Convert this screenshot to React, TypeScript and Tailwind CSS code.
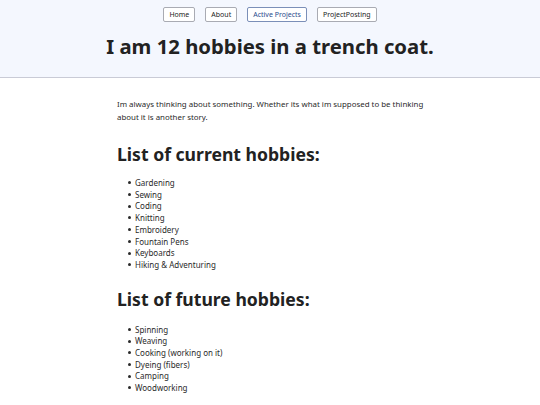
import React from "react";

const current = [
  "Gardening",
  "Sewing",
  "Coding",
  "Knitting",
  "Embroidery",
  "Fountain Pens",
  "Keyboards",
  "Hiking & Adventuring",
];

const future = [
  "Spinning",
  "Weaving",
  "Cooking (working on it)",
  "Dyeing (fibers)",
  "Camping",
  "Woodworking",
];

const links = ["Home", "About", "Active Projects", "ProjectPosting"];

function List({ items }: { items: string[] }) {
  return (
    <ul className="pl-[11px] text-[8px] leading-[11.7px] text-[#2a2a2a]">
      {items.map((h) => (
        <li key={h} className="flex items-center gap-[4px]">
          <span className="h-[3px] w-[3px] rounded-full bg-[#2a2a2a]" />
          {h}
        </li>
      ))}
    </ul>
  );
}

export default function App() {
  return (
    <div className="min-h-[405px] bg-white text-[#222] [font-family:'Noto_Sans',sans-serif]">
      <header className="h-[78px] border-b border-[#c9cbd6] bg-[#f4f7fe]">
        <nav className="flex justify-center gap-[10px] pt-[7px]">
          {links.map((l) => (
            <button
              key={l}
              type="button"
              className={`h-[15px] rounded-[2px] border bg-white px-[5px] text-[7px] leading-none ${
                l === "Active Projects" ? "border-[#7b8fb8] text-[#2a4c8e]" : "border-[#a9abb3] text-[#222]"
              }`}
            >
              {l}
            </button>
          ))}
        </nav>
        <h1 className="mt-[12px] text-center text-[20.3px] font-bold leading-[24px] text-[#222]">
          I am 12 hobbies in a trench coat.
        </h1>
      </header>

      <main className="mx-auto w-[314px] pl-[4px] pt-[20px]">
        <p className="text-[7.9px] leading-[13px] text-[#2a2a2a]">
          Im always thinking about something. Whether its what im supposed to be thinking about it is another story.
        </p>
        <h2 className="mt-[19px] mb-[12px] text-[17.6px] font-bold leading-[22px]">List of current hobbies:</h2>
        <List items={current} />
        <h2 className="mt-[17px] mb-[14px] text-[17.6px] font-bold leading-[22px]">List of future hobbies:</h2>
        <List items={future} />
      </main>
    </div>
  );
}
